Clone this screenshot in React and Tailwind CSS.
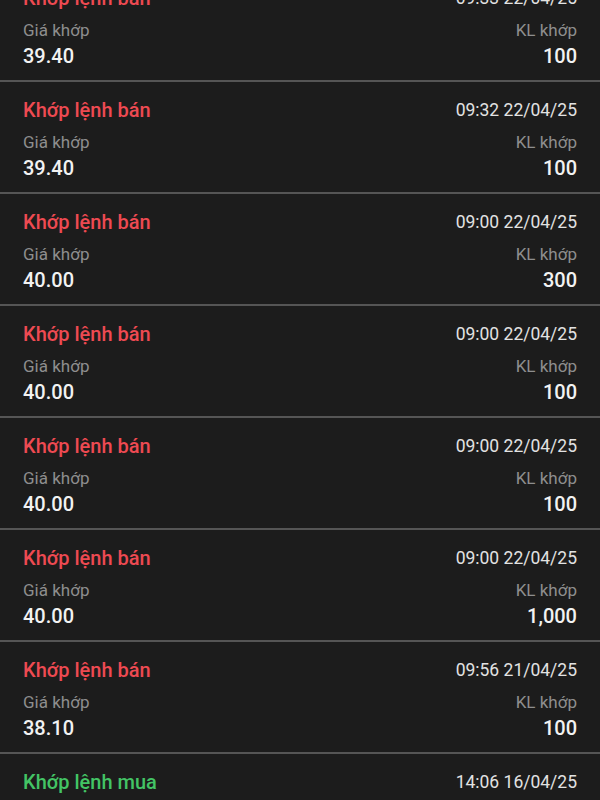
import React from 'react'

const orders = [
  { side: 'sell', time: '09:33 22/04/25', price: '39.40', qty: '100' },
  { side: 'sell', time: '09:32 22/04/25', price: '39.40', qty: '100' },
  { side: 'sell', time: '09:00 22/04/25', price: '40.00', qty: '300' },
  { side: 'sell', time: '09:00 22/04/25', price: '40.00', qty: '100' },
  { side: 'sell', time: '09:00 22/04/25', price: '40.00', qty: '100' },
  { side: 'sell', time: '09:00 22/04/25', price: '40.00', qty: '1,000' },
  { side: 'sell', time: '09:56 21/04/25', price: '38.10', qty: '100' },
  { side: 'buy', time: '14:06 16/04/25', price: '37.50', qty: '100' },
]

const OrderRow = ({ order }) => {
  const isBuy = order.side === 'buy'
  return (
    <div className="h-[112px] border-b-2 border-[#555555] px-[23px] pt-[16px] flex justify-between">
      <div className="flex flex-col">
        <div className={`text-[20px] leading-[24px] font-medium ${isBuy ? 'text-[#43c465]' : 'text-[#ee4a52]'}`}>
          {isBuy ? 'Khớp lệnh mua' : 'Khớp lệnh bán'}
        </div>
        <div className="mt-[9px] text-[17px] leading-[22px] text-[#8e8e8e]">Giá khớp</div>
        <div className="mt-[2px] text-[20px] leading-[26px] font-medium text-[#f2f2f2]">{order.price}</div>
      </div>
      <div className="flex flex-col items-end">
        <div className="text-[17.5px] leading-[24px] text-[#e2e2e2]">{order.time}</div>
        <div className="mt-[9px] text-[17px] leading-[22px] text-[#8e8e8e]">KL khớp</div>
        <div className="mt-[2px] text-[20px] leading-[26px] font-medium text-[#f2f2f2]">{order.qty}</div>
      </div>
    </div>
  )
}

export default function App() {
  return (
    <div className="w-[600px] h-[800px] overflow-hidden bg-[#1c1c1c] font-['Roboto',sans-serif]">
      <div className="-mt-[30px]">
        {orders.map((order, i) => (
          <OrderRow key={i} order={order} />
        ))}
      </div>
    </div>
  )
}
